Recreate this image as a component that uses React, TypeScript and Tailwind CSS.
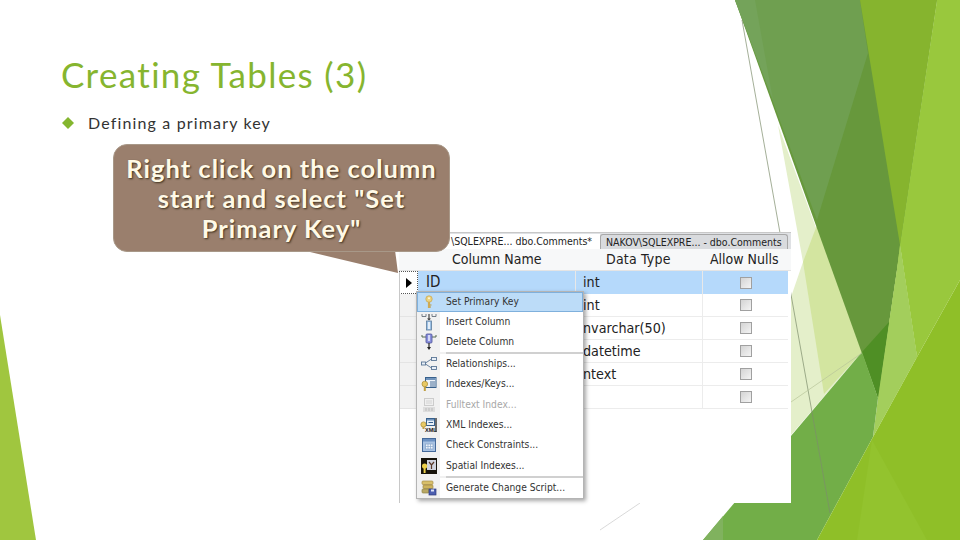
import React from 'react';

const rows = [
  { name: 'ID', type: 'int', active: true },
  { name: '', type: 'int' },
  { name: '', type: 'nvarchar(50)' },
  { name: '', type: 'datetime' },
  { name: '', type: 'ntext' },
  { name: '', type: '' },
];

const KeyIcon = () => (
  <svg width="16" height="16" viewBox="0 0 16 16">
    <circle cx="8" cy="5" r="3.2" fill="#ecd27e" stroke="#c9a955" strokeWidth="0.8" />
    <circle cx="8" cy="4.2" r="1" fill="#fff8d8" />
    <path d="M8 8v6" stroke="#cdaa55" strokeWidth="2.2" fill="none" />
    <path d="M9 11h1.5M9 13h1" stroke="#b8963f" strokeWidth="1" fill="none" />
  </svg>
);

const InsertIcon = () => (
  <svg width="18" height="18" viewBox="0 0 18 18">
    <path d="M2 1v2.5h4V1M12 1v2.5h4V1" stroke="#66707c" strokeWidth="0.9" fill="none" />
    <path d="M9 1v5" stroke="#333" strokeWidth="1.1" />
    <path d="M7 5.5l2 2 2-2z" fill="#333" />
    <rect x="6.5" y="8" width="5" height="9" fill="#9cc0e4" stroke="#5c7c9c" strokeWidth="0.8" />
    <rect x="8" y="9" width="2" height="7" fill="#e4eef8" />
  </svg>
);

const DeleteIcon = () => (
  <svg width="18" height="18" viewBox="0 0 18 18">
    <path d="M2 2v2h4M16 2v2h-4" stroke="#566a50" strokeWidth="1" fill="none" />
    <rect x="6" y="1" width="6" height="9" rx="1" fill="#8a90dc" stroke="#4a5098" strokeWidth="0.8" />
    <rect x="8" y="2" width="2" height="6" fill="#d4d8f6" />
    <path d="M9 10v5" stroke="#222" strokeWidth="1.2" />
    <path d="M7 14l2 3 2-3z" fill="#222" />
  </svg>
);

const RelIcon = () => (
  <svg width="18" height="16" viewBox="0 0 18 16">
    <rect x="1.5" y="6" width="4" height="3" fill="#e8eff7" stroke="#5a7696" strokeWidth="0.9" />
    <rect x="11.5" y="1.5" width="5" height="3" fill="#e8eff7" stroke="#5a7696" strokeWidth="0.9" />
    <rect x="11.5" y="10.5" width="5" height="3" fill="#e8eff7" stroke="#5a7696" strokeWidth="0.9" />
    <path d="M5.5 7L11.5 3M5.5 8L11.5 12" stroke="#5a7696" strokeWidth="0.9" fill="none" />
  </svg>
);

const IndexIcon = () => (
  <svg width="16" height="16" viewBox="0 0 16 16">
    <rect x="4.5" y="1.5" width="10.5" height="10" fill="#eef3f9" stroke="#37608c" />
    <rect x="5" y="2" width="9.5" height="2" fill="#6f93bb" />
    <path d="M9 6h5M9 8h5M9 10h5" stroke="#37608c" strokeWidth="0.9" />
    <circle cx="3.8" cy="8" r="2.8" fill="#e8c965" stroke="#b3933a" strokeWidth="0.8" />
    <path d="M3.8 10.5v4.5" stroke="#c09f42" strokeWidth="2" />
  </svg>
);

const FulltextIcon = () => (
  <svg width="16" height="16" viewBox="0 0 16 16">
    <rect x="3.5" y="1.5" width="9" height="7" fill="#efefef" stroke="#cccccc" />
    <path d="M5 4h6M5 6h6" stroke="#d4d4d4" />
    <rect x="2" y="10" width="12" height="5" fill="#dddddd" />
    <path d="M5 11v3M8 11v3M11 11v3" stroke="#bbbbbb" />
  </svg>
);

const XmlIcon = () => (
  <svg width="17" height="16" viewBox="0 0 17 16">
    <rect x="6.5" y="1.5" width="8" height="7" fill="#e8f0f8" stroke="#37608c" />
    <rect x="7" y="2" width="7" height="1.6" fill="#6f93bb" />
    <path d="M8.5 5.5h4.5" stroke="#37608c" />
    <path d="M16 1v14" stroke="#111" strokeWidth="1.2" />
    <circle cx="3.5" cy="7.5" r="2.6" fill="#e8c965" stroke="#b3933a" strokeWidth="0.8" />
    <path d="M3.5 10v2" stroke="#c09f42" strokeWidth="2" />
    <text x="5" y="15" fontSize="5.5" fontWeight="700" fill="#111" fontFamily="Liberation Sans, sans-serif">XML</text>
  </svg>
);

const CheckIcon = () => (
  <svg width="16" height="16" viewBox="0 0 16 16">
    <rect x="1.5" y="1.5" width="13" height="13" fill="#a8c2e2" stroke="#44699a" />
    <rect x="2" y="2" width="12" height="2.5" fill="#6a90c2" />
    <rect x="4.5" y="7" width="7.5" height="5" fill="#eef4fb" stroke="#8aa8cc" strokeWidth="0.8" />
    <path d="M7 7v5M9.5 7v5M4.5 9.5h7.5" stroke="#8aa8cc" strokeWidth="0.7" />
  </svg>
);

const SpatialIcon = () => (
  <svg width="16" height="16" viewBox="0 0 16 16">
    <rect x="0" y="0" width="16" height="16" fill="#17130a" />
    <rect x="6" y="2" width="9" height="10" fill="#cfd3de" />
    <circle cx="3.6" cy="8" r="2.6" fill="#ecd04a" />
    <path d="M3.6 10v5" stroke="#ecd04a" strokeWidth="2" />
    <path d="M8 4l2.5 3 2.5-3M10.5 7v4" stroke="#5a3a2a" strokeWidth="1.2" fill="none" />
  </svg>
);

const ScriptIcon = () => (
  <svg width="16" height="16" viewBox="0 0 16 16">
    <rect x="1" y="1" width="11" height="3.5" rx="1" fill="#d8bf6a" stroke="#a88e45" strokeWidth="0.7" />
    <rect x="2" y="5" width="10" height="3.5" rx="1" fill="#cdb35c" stroke="#a08840" strokeWidth="0.7" />
    <rect x="1" y="9" width="7" height="4" rx="1" fill="#b9a864" stroke="#8f8445" strokeWidth="0.7" />
    <rect x="8" y="9" width="7" height="6" fill="#4c5fb0" stroke="#2f3b7c" strokeWidth="0.7" />
    <rect x="10" y="9.5" width="3" height="2" fill="#dfe4f6" />
  </svg>
);

const menuItems = [
  { label: 'Set Primary Key', icon: <KeyIcon />, height: 'h-[20px]', active: true },
  { label: 'Insert Column', icon: <InsertIcon />, height: 'h-[20px]' },
  { label: 'Delete Column', icon: <DeleteIcon />, height: 'h-[20px]', sep: true },
  { label: 'Relationships...', icon: <RelIcon />, height: 'h-[20px]' },
  { label: 'Indexes/Keys...', icon: <IndexIcon />, height: 'h-[20px]' },
  { label: 'Fulltext Index...', icon: <FulltextIcon />, height: 'h-[21px]', disabled: true },
  { label: 'XML Indexes...', icon: <XmlIcon />, height: 'h-[20px]' },
  { label: 'Check Constraints...', icon: <CheckIcon />, height: 'h-[20px]' },
  { label: 'Spatial Indexes...', icon: <SpatialIcon />, height: 'h-[21px]', sep: true },
  { label: 'Generate Change Script...', icon: <ScriptIcon />, height: 'h-[20px]' },
];

const Background = () => (
  <svg className="absolute inset-0" width="960" height="540" viewBox="0 0 960 540">
    <polygon points="0,315 0,540 36,540" fill="#a0c63f" />
    <polygon points="778,125 862,352 791,435 791,297 803,262" fill="#e4efca" />
    <polygon points="817,225 862,352 824,394 803,262" fill="#d3e5a0" />
    <polygon points="735,0 937,0 878,398" fill="#67983c" />
    <polygon points="735,0 860,0 868,53 817,220" fill="#6f9f50" />
    <polygon points="735,0 755,0 773,100" fill="#74a35a" />
    <polygon points="860,0 937,0 900,245" fill="#86b42e" />
    <polygon points="937,0 960,0 960,280 917,357 900,245" fill="#99c83d" />
    <polygon points="897,270 900,245 917,357 878,398" fill="#99c83d" />
    <polygon points="900,245 917,357 873,437 878,398 897,270" fill="#a3ce5c" />
    <polygon points="889,322 862,352 878,398" fill="#4f8f25" />
    <polygon points="862,352 878,398 873,437 817,540 703,540" fill="#72ae48" />
    <polygon points="703,540 723,516 723,540" fill="#80b25e" />
    <polygon points="960,280 960,540 817,540 873,437 917,357" fill="#8fbf28" />
    <polygon points="872,440 927,540 857,540" fill="#93c32e" />
    <line x1="742" y1="20" x2="830" y2="513" stroke="#7d8c6c" strokeWidth="0.7" />
    <line x1="600" y1="530" x2="640" y2="503" stroke="#c8c8c8" strokeWidth="0.7" />
    <line x1="791" y1="402" x2="862" y2="353" stroke="#b8c49a" strokeWidth="0.7" />
  </svg>
);

const App: React.FC = () => {
  return (
    <div className="relative w-[960px] h-[540px] overflow-hidden bg-white font-['Lato',sans-serif]">
      <Background />

      {/* slide text */}
      <div className="relative flex flex-col pl-[61px] pt-[53px]">
        <h1 className="text-[35px] leading-[42px] font-normal tracking-[1.33px] text-[#86b52f]">Creating Tables (3)</h1>
        <div className="flex items-center mt-[17px]">
          <svg width="12" height="12" viewBox="0 0 12 12" className="ml-[1px] mr-[14px]">
            <polygon points="6,0 12,6 6,12 0,6" fill="#84b62f" />
          </svg>
          <span className="text-[16px] leading-[22px] tracking-[1.15px] text-[#333333]">Defining a primary key</span>
        </div>
      </div>

      {/* SSMS table designer screenshot */}
      <div className="absolute left-[399px] top-[232px] w-[392px] h-[271px] bg-white font-['DejaVu_Sans_Condensed','Liberation_Sans',sans-serif]">
        <div className="flex h-[17px] items-end bg-[#dfe1e4] border-t border-[#c8c8c8] pl-[2px] text-[10.5px] leading-[15px] text-[#222]">
          <div className="w-[199px] h-[15px] bg-white pl-[50px] whitespace-nowrap overflow-hidden">\SQLEXPRE... dbo.Comments*</div>
          <div className="w-[188px] h-[15px] bg-[#d9dbde] border border-b-0 border-[#a8a8a8] rounded-t-[3px] pl-[5px] whitespace-nowrap">NAKOV\SQLEXPRE... - dbo.Comments</div>
        </div>
        <div className="grid grid-cols-[19px_157px_127px_86px] h-[22px] items-center text-[14px] text-[#222] bg-[#f7f8f9] border-b border-[#e4e4e4]">
          <div />
          <div className="pl-[34px]">Column Name</div>
          <div className="pl-[31px] tracking-[0.2px]">Data Type</div>
          <div className="pl-[8px]">Allow Nulls</div>
        </div>
        {rows.map((row, i) => (
          <div key={i} className="grid grid-cols-[19px_157px_127px_86px] h-[23px] items-center text-[14.2px] text-[#222]">
            <div className={`flex h-full items-center justify-center ${row.active ? 'border border-dotted border-[#555]' : 'bg-[#f2f2f2] border-b border-[#e4e4e4]'}`}>
              {row.active && <div className="w-0 h-0 border-y-[5px] border-y-transparent border-l-[6px] border-l-black" />}
            </div>
            <div className={`h-full pl-[8px] leading-[22px] ${row.active ? 'bg-[#b5d9fb] text-[15px]' : 'border-b border-[#ececec]'}`}>{row.name}</div>
            <div className={`h-full pl-[7px] leading-[22px] border-l border-[#e8e8e8] ${row.active ? 'bg-[#b5d9fb]' : 'border-b border-[#ececec]'}`}>{row.type}</div>
            <div className={`flex h-full items-center justify-center border-l border-[#e8e8e8] ${row.active ? 'bg-[#b5d9fb]' : 'border-b border-[#ececec]'}`}>
              <div className="w-[12px] h-[12px] border border-[#a0a0a0] bg-gradient-to-br from-[#d4d4d4] to-[#f4f4f4]" />
            </div>
          </div>
        ))}
        <div className="absolute left-0 top-[40px] bottom-0 w-px bg-[#c8c8c8]" />
      </div>

      {/* context menu */}
      <div className="absolute left-[416px] top-[291px] w-[168px] h-[208px] flex flex-col bg-white border border-[#b4b4b4] shadow-[2px_2px_4px_rgba(0,0,0,0.35)] text-[10.2px] text-[#333] font-['DejaVu_Sans_Condensed','Liberation_Sans',sans-serif]">
        {menuItems.map(item => (
          <div key={item.label} className="flex flex-col">
            <div className={`flex items-center ${item.height} ${item.active ? 'bg-[#bcdcf8] border border-[#7fb0dc]' : ''}`}>
              <div className={`flex h-full items-center justify-center ${item.active ? 'w-[22px]' : 'w-[23px] bg-[#f1f1f1]'}`}>{item.icon}</div>
              <span className={`whitespace-nowrap pl-[6px] ${item.disabled ? 'text-[#a8a8a8]' : ''}`}>{item.label}</span>
            </div>
            {item.sep && (
              <div className="flex h-[2px]">
                <div className="w-[29px] bg-[#f1f1f1]" />
                <div className="flex-1 bg-[#d0d0d0]" />
              </div>
            )}
          </div>
        ))}
      </div>

      {/* callout */}
      <svg className="absolute left-[300px] top-[250px]" width="110" height="26" viewBox="0 0 110 26">
        <polygon points="10,2 98,23 95,0" fill="#9a7f6d" />
      </svg>
      <div className="absolute left-[113px] top-[144px] flex w-[337px] h-[108px] items-center justify-center rounded-[14px] border border-[#a89888] bg-[#9a7f6d] px-[8px] text-center text-[25.5px] leading-[30px] font-bold tracking-[1px] text-[#fff9e6] [text-shadow:1px_1px_2px_rgba(40,30,10,0.8)]">
        <span>Right click on the column<br />start and select "Set<br />Primary Key"</span>
      </div>
    </div>
  );
};

export default App;
